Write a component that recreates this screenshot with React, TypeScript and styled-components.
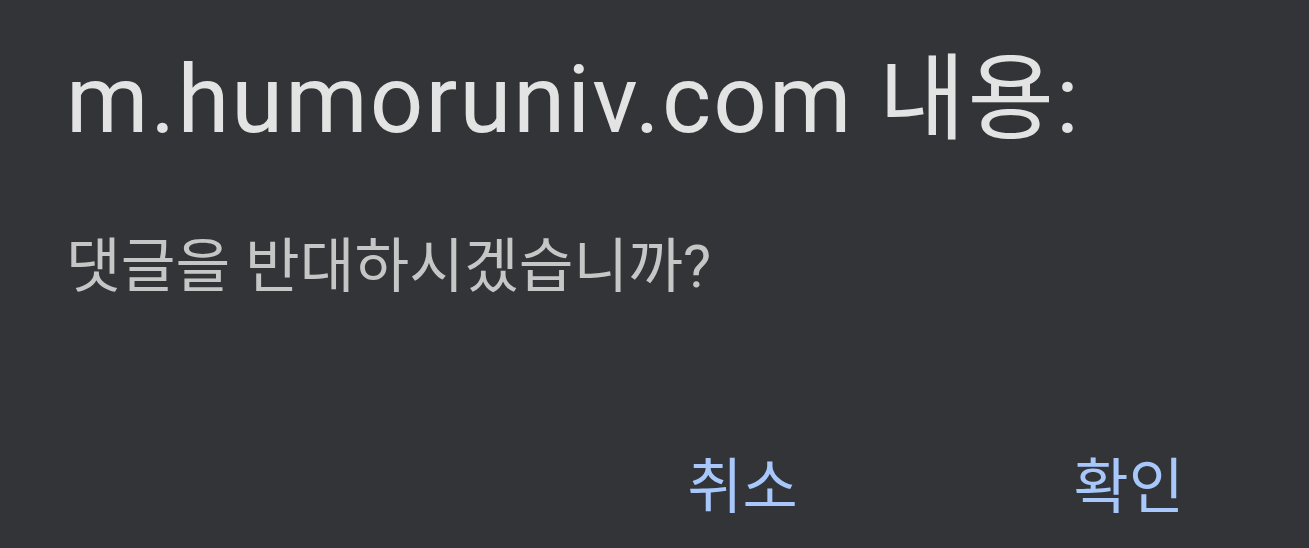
import styled, { createGlobalStyle } from 'styled-components';

const GlobalStyle = createGlobalStyle`
  html, body {
    margin: 0;
    padding: 0;
    background: #323437;
  }
`;

const Dialog = styled.div`
  width: 1309px;
  height: 548px;
  box-sizing: border-box;
  background: #323437;
  padding: 44px 125px 0 66px;
  display: flex;
  flex-direction: column;
  font-family: Roboto, 'Noto Sans CJK KR', sans-serif;
`;

const Title = styled.h1`
  margin: 0;
  font-size: 94px;
  font-weight: 400;
  line-height: 112px;
  color: #e3e3e3;
  letter-spacing: 2.1px;
`;

const Message = styled.p`
  margin: 76px 0 0;
  font-size: 59.5px;
  font-weight: 400;
  line-height: 70px;
  color: #c4c7c5;
`;

const Actions = styled.div`
  margin-top: auto;
  margin-bottom: 24px;
  display: flex;
  justify-content: flex-end;
  gap: 276px;
`;

const Button = styled.button`
  background: none;
  border: none;
  padding: 0;
  font-family: inherit;
  font-size: 60px;
  font-weight: 400;
  line-height: 72px;
  color: #a8c7fa;
  cursor: pointer;
`;

const App = () => {
  return (
    <>
      <GlobalStyle />
      <Dialog>
        <Title>m.humoruniv.com 내용:</Title>
        <Message>댓글을 반대하시겠습니까?</Message>
        <Actions>
          <Button>취소</Button>
          <Button>확인</Button>
        </Actions>
      </Dialog>
    </>
  );
};

export default App;
